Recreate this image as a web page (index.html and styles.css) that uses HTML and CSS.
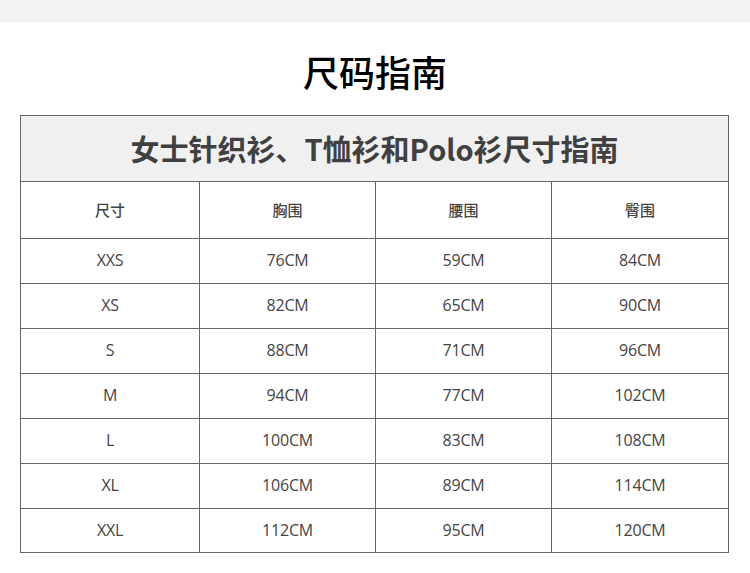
FILE: index.html
```html
<!DOCTYPE html>
<html lang="zh-CN">
<head>
<meta charset="utf-8">
<title>尺码指南</title>
<link rel="stylesheet" href="styles.css">
</head>
<body>
<div class="topbar"></div>
<h1 class="page-title">尺码指南</h1>
<div class="chart">
  <div class="chart-title">女士针织衫、T恤衫和Polo衫尺寸指南</div>
  <div class="grid">
    <div class="cell head">尺寸</div>
    <div class="cell head">胸围</div>
    <div class="cell head">腰围</div>
    <div class="cell head">臀围</div>

    <div class="cell">XXS</div><div class="cell">76CM</div><div class="cell">59CM</div><div class="cell">84CM</div>
    <div class="cell">XS</div><div class="cell">82CM</div><div class="cell">65CM</div><div class="cell">90CM</div>
    <div class="cell">S</div><div class="cell">88CM</div><div class="cell">71CM</div><div class="cell">96CM</div>
    <div class="cell">M</div><div class="cell">94CM</div><div class="cell">77CM</div><div class="cell">102CM</div>
    <div class="cell">L</div><div class="cell">100CM</div><div class="cell">83CM</div><div class="cell">108CM</div>
    <div class="cell">XL</div><div class="cell">106CM</div><div class="cell">89CM</div><div class="cell">114CM</div>
    <div class="cell">XXL</div><div class="cell">112CM</div><div class="cell">95CM</div><div class="cell">120CM</div>
  </div>
</div>
</body>
</html>
```

FILE: styles.css
```css
html, body {
  margin: 0;
  padding: 0;
  background: #ffffff;
}

body {
  width: 750px;
  font-family: "Noto Sans CJK SC", "Noto Sans", sans-serif;
}

.topbar {
  height: 22px;
  background: #f2f2f2;
}

.page-title {
  margin: 0;
  height: 93px;
  line-height: 98px;
  text-align: center;
  font-size: 36px;
  font-weight: 500;
  color: #000;
}

.chart {
  margin-left: 20px;
  width: 708px;
  border-top: 1px solid #666;
  border-left: 1px solid #666;
}

.chart-title {
  height: 66px;
  box-sizing: border-box;
  border-right: 1px solid #666;
  border-bottom: 1px solid #666;
  background: #f0f0f0;
  display: flex;
  align-items: center;
  justify-content: center;
  padding-bottom: 2px;
  font-size: 29px;
  font-weight: 700;
  color: #404040;
}

.grid {
  display: grid;
  grid-template-columns: 179px 176px 176px 177px;
  grid-template-rows: 57px repeat(6, 45px) 44px;
}

.cell {
  box-sizing: border-box;
  border-right: 1px solid #666;
  border-bottom: 1px solid #666;
  display: flex;
  align-items: center;
  justify-content: center;
  padding-bottom: 2px;
  font-family: "Open Sans", "Noto Sans CJK SC", sans-serif;
  font-size: 16px;
  color: #444;
  letter-spacing: -0.2px;
}

.cell.head {
  font-family: "Noto Sans CJK SC", sans-serif;
  font-size: 15px;
  font-weight: 500;
  letter-spacing: 0;
}
```
